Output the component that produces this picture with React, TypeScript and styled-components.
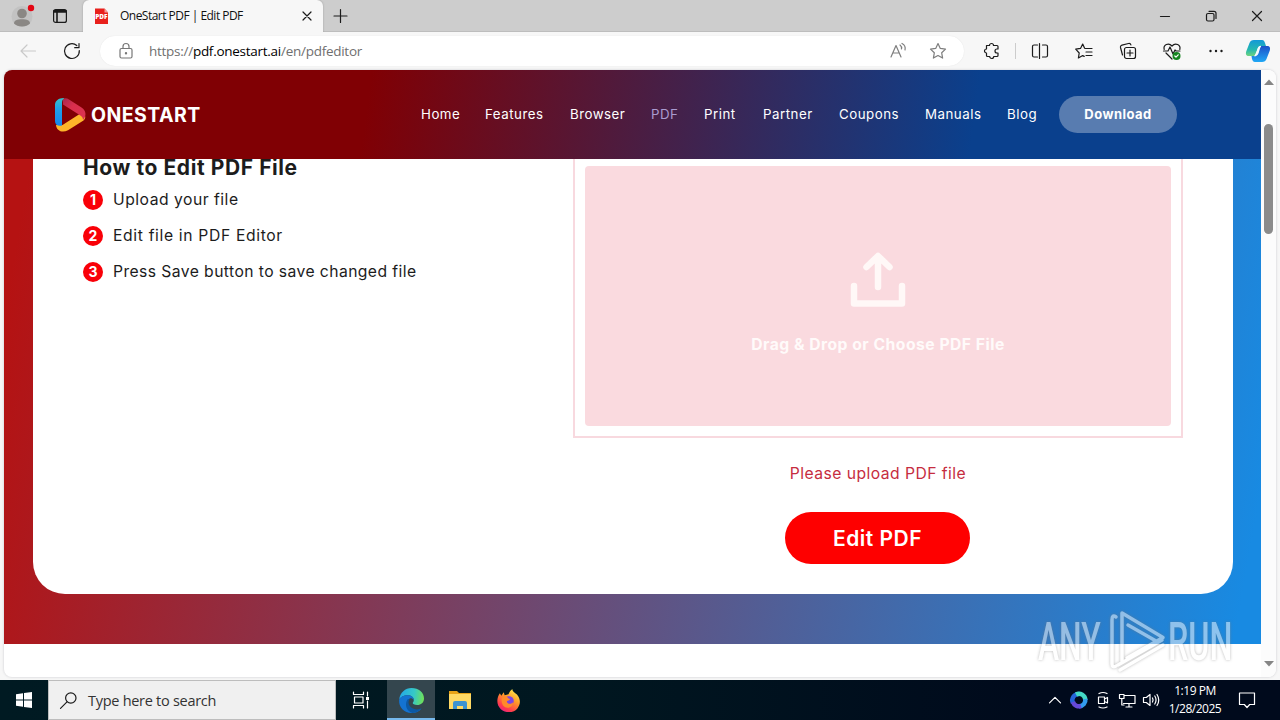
import React from "react";
import styled, { createGlobalStyle } from "styled-components";

const ui = `"Open Sans", "Noto Sans", sans-serif`;
const site = `Inter, "Liberation Sans", sans-serif`;

const Global = createGlobalStyle`
  * { box-sizing: border-box; }
  body { margin: 0; overflow: hidden; }
`;

const Desktop = styled.div`
  position: relative;
  width: 1280px;
  height: 720px;
  display: flex;
  flex-direction: column;
  overflow: hidden;
  background: #f7f7f7;
  font-family: ${ui};
  white-space: nowrap;
`;

const Icon = styled.svg<{ $w?: number; $h?: number }>`
  display: block;
  flex: none;
  width: ${(p) => p.$w ?? 20}px;
  height: ${(p) => p.$h ?? p.$w ?? 20}px;
  overflow: visible;
  fill: none;
  stroke: ${(p) => p.color ?? "#1b1b1b"};
  stroke-width: 1.2;
  stroke-linecap: round;
  stroke-linejoin: round;
`;

/* ---------- tab strip ---------- */
const TabStrip = styled.div`
  display: flex;
  height: 32px;
  background: #cdcdcd;
  box-shadow: inset 0 -1px #bdbdbd;
`;
const StripTools = styled.div`
  width: 83px;
  display: flex;
  align-items: center;
  gap: 19px;
  padding-left: 12px;
`;
const Tab = styled.div`
  width: 240px;
  display: flex;
  align-items: center;
  padding: 0 12px 0 12px;
  background: #f7f7f7;
  border-radius: 6px 6px 0 0;
  box-shadow: 0 0 2px #999;
  clip-path: inset(0 -3px 0 -3px);
`;
const TabTitle = styled.span`
  flex: 1;
  margin: -1px 0 0 11px;
  font-size: 12px;
  letter-spacing: -0.52px;
  color: #111;
`;
const NewTab = styled.div`
  flex: 1;
  display: flex;
  align-items: center;
  padding-left: 11px;
`;
const WindowButtons = styled.div`
  display: flex;
  align-items: center;
  gap: 34px;
  padding-right: 17px;
`;

/* ---------- toolbar ---------- */
const Toolbar = styled.div`
  display: flex;
  align-items: center;
  height: 38px;
  padding: 0 10px 0 18px;
  background: #f7f7f7;
`;
const NavButtons = styled.div`
  display: flex;
  gap: 24px;
  width: 82px;
`;
const AddressBar = styled.div`
  width: 864px;
  height: 30px;
  display: flex;
  align-items: center;
  padding: 0 16px;
  border-radius: 15px;
  background: #fff;
  box-shadow: 0 0 1px #ddd;
`;
const Url = styled.span`
  flex: 1;
  margin-left: 13px;
  font-size: 13.5px;
  letter-spacing: -0.27px;
  color: #6f6f6f;
  b {
    font-weight: 400;
    color: #000;
  }
`;
const BarIcons = styled.div`
  display: flex;
  gap: 20px;
`;
const ToolIcons = styled.div`
  flex: 1;
  display: flex;
  align-items: center;
  gap: 24px;
  padding-left: 18px;
  > :last-child {
    margin-left: -4px;
  }
`;
const Separator = styled.i`
  width: 1px;
  height: 16px;
  margin: 0 -10px 0 -11px;
  background: #ccc;
`;

/* ---------- web page ---------- */
const Viewport = styled.div`
  display: flex;
  width: 1272px;
  height: 607px;
  margin: 0 4px 3px;
  overflow: hidden;
  border-radius: 8px;
  background: #fff;
  box-shadow: 0 0 2px 1px #e2e2e4;
`;
const Page = styled.div`
  width: 1257px;
  display: flex;
  flex-direction: column;
  font-family: ${site};
`;
const Header = styled.header`
  z-index: 1;
  display: flex;
  align-items: center;
  height: 89px;
  padding-left: 51px;
  background: linear-gradient(98deg, #800004 29%, #0a408d 77%);
`;
const Brand = styled.div`
  width: 366px;
  display: flex;
  align-items: center;
  gap: 5px;
`;
const BrandName = styled.span`
  font-size: 19.5px;
  font-weight: 700;
  letter-spacing: 0.45px;
  color: #fff;
`;
const NavItem = styled.a<{ $w: number; $active?: boolean }>`
  width: ${(p) => p.$w}px;
  margin: -2px 25px 0 0;
  font-size: 13.3px;
  letter-spacing: 0.5px;
  color: ${(p) => (p.$active ? "#a99bd0" : "#fff")};
`;
const Download = styled.a`
  width: 118px;
  height: 37px;
  margin-left: -2px;
  border-radius: 19px;
  background: #587cb0;
  color: #fff;
  font-size: 13px;
  font-weight: 700;
  letter-spacing: 0.45px;
  line-height: 37px;
  text-align: center;
`;
const Hero = styled.main`
  height: 485px;
  padding: 0 28px 50px 29px;
  background: linear-gradient(100deg, #b51212 2%, #188ae2 98%);
`;
const Card = styled.section`
  height: 435px;
  display: flex;
  justify-content: space-between;
  padding: 0 50px;
  border-radius: 0 0 32px 32px;
  background: #fff;
`;
const Steps = styled.div`
  margin-top: -7px;
  color: #1c1c1c;
`;
const Title = styled.h2`
  margin: 0 0 2px;
  font-size: 21px;
  font-weight: 700;
  letter-spacing: 0.58px;
  line-height: 32px;
`;
const Step = styled.div`
  display: flex;
  align-items: center;
  gap: 10px;
  height: 28px;
  margin-bottom: 8px;
`;
const StepText = styled.span<{ $spacing: number }>`
  margin-top: -2px;
  font-size: 15.7px;
  letter-spacing: ${(p) => p.$spacing}px;
`;
const StepNumber = styled.span`
  width: 20px;
  height: 20px;
  border-radius: 50%;
  background: #f90008;
  color: #fff;
  font-size: 14px;
  font-weight: 700;
  line-height: 20px;
  text-align: center;
`;
const UploadColumn = styled.div`
  width: 610px;
  display: flex;
  flex-direction: column;
  align-items: center;
`;
const DropFrame = styled.div`
  width: 100%;
  height: 279px;
  padding: 7px 10px 10px;
  border: 2px solid #f8d9df;
  border-top: 0;
`;
const DropZone = styled.div`
  height: 260px;
  display: flex;
  flex-direction: column;
  align-items: center;
  padding-top: 86px;
  border-radius: 4px;
  background: #fadadf;
  color: #fffafa;
  font-size: 15.7px;
  font-weight: 700;
  letter-spacing: 0.5px;
`;
const DropLabel = styled.span`
  margin-top: 25px;
  line-height: 24px;
`;
const Warning = styled.p`
  margin: 24px 0 26px;
  line-height: 24px;
  font-size: 15.7px;
  letter-spacing: 0.45px;
  color: #c62c40;
`;
const EditButton = styled.button`
  width: 185px;
  height: 52px;
  flex: none;
  margin-right: 1px;
  border: 0;
  border-radius: 26px;
  background: #fe0000;
  color: #fff;
  font: 600 21px/52px ${site};
  letter-spacing: 0.5px;
`;
const Scrollbar = styled.div`
  flex: 1;
  display: flex;
  flex-direction: column;
  align-items: center;
  padding: 9px 0 10px;
  background: #fcfcfc;
`;
const Thumb = styled.div`
  width: 9px;
  height: 110px;
  margin: 39px 0 auto;
  border-radius: 5px;
  background: #8b8b8b;
`;

/* ---------- watermark ---------- */
const Watermark = styled.svg`
  position: absolute;
  left: 1030px;
  top: 604px;
  width: 230px;
  height: 76px;
  opacity: 0.5;
  filter: drop-shadow(0 0 1.5px #777);
  font-family: Roboto, sans-serif;
  font-size: 53px;
  font-weight: 500;
`;

/* ---------- taskbar ---------- */
const Taskbar = styled.div`
  display: flex;
  align-items: center;
  height: 40px;
  background: linear-gradient(90deg, #001a22, #001720 45%, #000a1c 80%);
`;
const TaskButton = styled.div<{ $active?: boolean; $w?: number }>`
  width: ${(p) => p.$w ?? 49}px;
  height: 40px;
  display: flex;
  align-items: center;
  justify-content: center;
  background: ${(p) => (p.$active ? "#34464e" : "none")};
  box-shadow: ${(p) => (p.$active ? "inset 0 -2px #76b9ed" : "none")};
`;
const Search = styled.div`
  width: 288px;
  height: 40px;
  display: flex;
  align-items: center;
  gap: 11px;
  padding-left: 11px;
  border: 1px solid #bdbdbd;
  background: #f0f0f0;
  color: #333;
  font-size: 14.5px;
  letter-spacing: -0.28px;
`;
const Tray = styled.div`
  margin-left: auto;
  display: flex;
  align-items: center;
  gap: 6px;
  padding-right: 24px;
`;
const Clock = styled.div`
  width: 64px;
  margin: 0 5px 0 -3px;
  color: #fff;
  font-size: 12px;
  letter-spacing: -0.48px;
  line-height: 18px;
  text-align: center;
`;

const nav: [string, number][] = [
  ["Home", 39],
  ["Features", 60],
  ["Browser", 56],
  ["PDF", 28],
  ["Print", 34],
  ["Partner", 51],
  ["Coupons", 61],
  ["Manuals", 57],
  ["Blog", 29],
];
const steps: [string, number][] = [
  ["Upload your file", 0.5],
  ["Edit file in PDF Editor", 0.65],
  ["Press Save button to save changed file", 0.42],
];

const Profile = () => (
  <Icon $w={22} viewBox="0 0 22 22">
    <g stroke="none">
      <circle cx="10" cy="11.5" r="10.5" fill="#c2c2c2" />
      <circle cx="10" cy="8.5" r="4.8" fill="#8a8784" />
      <path d="M2 18.5c0-3 3-4.300 8-4.300s8 1.300 8 4.300c-2 2-4.500 3-8 3s-6-1-8-3z" fill="#8a8784" />
      <circle cx="19" cy="3" r="3.200" fill="#e30613" />
    </g>
  </Icon>
);

const PdfIcon = () => (
  <Icon $w={14} $h={17} viewBox="0 0 14 17">
    <path d="M0 .5h9.500L13 4.500V16H0z" fill="#e8201c" stroke="none" />
    <path d="M9.500 .5v4H13z" fill="#f79a94" stroke="none" />
    <text x="0.200" y="10.800" fontSize="6" fontWeight="800" fill="#fff" stroke="none" textLength="12.300" lengthAdjust="spacingAndGlyphs">PDF</text>
  </Icon>
);

const Logo = () => (
  <Icon $w={31} $h={34} viewBox="0 0 31 34">
    <defs>
      <linearGradient id="blue" x1="0" y1="0" x2="0" y2="1">
        <stop offset="0" stopColor="#35c3c8" />
        <stop offset=".4" stopColor="#1f9fe8" />
        <stop offset="1" stopColor="#1587ee" />
      </linearGradient>
      <linearGradient id="red" x1="0" y1="0" x2="1" y2="1">
        <stop offset="0" stopColor="#a9284f" />
        <stop offset=".4" stopColor="#d92f4c" />
        <stop offset="1" stopColor="#dc3350" />
      </linearGradient>
    </defs>
    <g stroke="none">
      <path d="M7.500 27 27 14.500c3.500 2 4.500 5.500 1.500 8L13 32.200C7.500 35.300 1.500 33 1 27z" fill="#fdb52a" />
      <path d="M8 1c2-1.200 4-.8 6 .5l12.500 8c4.800 3 5.300 8.500 1.500 12.500 0-2-1-3.500-3-4.700L8 6.500z" fill="url(#red)" />
      <path d="M0 7C0 2.500 4-.3 9.500 0 7 1.500 7 4 7 6v21.500C3 28.500 0 27 0 23z" fill="url(#blue)" />
    </g>
  </Icon>
);

const Edge = () => (
  <Icon $w={25} viewBox="0 0 24 24">
    <defs>
      <linearGradient id="edge" x1="0" y1=".3" x2="1" y2=".4">
        <stop offset="0" stopColor="#23a7ea" />
        <stop offset=".6" stopColor="#36c9c6" />
        <stop offset="1" stopColor="#6fe15a" />
      </linearGradient>
    </defs>
    <g stroke="none">
      <path d="M.2 11C1 4.500 6 0 12 0c7 0 12 4.500 12 10 0 4-3 6.300-6.500 6.300-3 0-4.300-1-4.300-1.800 0-.7 1-1.200 1-3C14.200 9 11.500 7 8.500 7 4.500 7 1.200 9 .2 11z" fill="url(#edge)" />
      <path d="M.1 11.500C1 8.500 4.500 7 8.500 7c3 0 5.700 2 5.700 4.500-1-1.500-2.500-2-4-1.500-3 2-3 6.500.3 9.500 3 2.500 7.500 2.500 11 .3C19.500 22.500 16 24 12 24 5 24-.4 18.500.1 11.500z" fill="#1473d1" />
      <path d="M8.500 10.500C6 13.500 6 19 9.500 22c1 1 2.200 1.700 3.500 2 3.700-.2 7-2 8.700-4.500-6 2.800-12-.5-12.500-5-.1-1.500.2-3 1-4z" fill="#0c59a4" />
    </g>
  </Icon>
);

export default function App() {
  return (
    <Desktop>
      <Global />
      <TabStrip>
        <StripTools>
          <Profile />
          <Icon $w={14} viewBox="0 0 14 14">
            <rect x=".6" y=".6" width="12.800" height="12.800" rx="2" />
            <path d="M1 1.800h12M1 3h12M4 3v10" strokeWidth="1.600" />
          </Icon>
        </StripTools>
        <Tab>
          <PdfIcon />
          <TabTitle>OneStart PDF | Edit PDF</TabTitle>
          <Icon $w={8} viewBox="0 0 8 8"><path d="M0 0l8 8M8 0 0 8" /></Icon>
        </Tab>
        <NewTab>
          <Icon $w={14} viewBox="0 0 14 14"><path d="M6.500 .5v13M0 7h13" /></Icon>
        </NewTab>
        <WindowButtons>
          <Icon $w={12} viewBox="0 0 12 12"><path d="M1.500 6.500h9" /></Icon>
          <Icon $w={12} viewBox="0 0 12 12">
            <rect x="1.500" y="3.500" width="7.500" height="7.500" rx="1.500" />
            <path d="M4 1.300h5a2 2 0 0 1 2 2V8.500" />
          </Icon>
          <Icon $w={12} viewBox="0 0 12 12"><path d="M1.500 1.500l9 9M10.500 1.500l-9 9" /></Icon>
        </WindowButtons>
      </TabStrip>

      <Toolbar>
        <NavButtons>
          <Icon color="#c9c9c9" viewBox="0 0 20 20"><path d="M17.500 10H3M9 4l-6 6 6 6" /></Icon>
          <Icon viewBox="0 0 20 20"><path d="M17.300 9.500a7.400 7.400 0 1 1-2.500-5M17 2.500v4.200h-4.300" /></Icon>
        </NavButtons>
        <AddressBar>
          <Icon color="#777" viewBox="0 0 20 20">
            <rect x="4" y="7.500" width="12" height="9.500" rx="1.500" />
            <path d="M7 7.500V5.500a3 3 0 0 1 6 0v2" />
            <circle cx="10" cy="12.300" r=".6" />
          </Icon>
          <Url>https://<b>pdf.onestart.ai</b>/en/pdfeditor</Url>
          <BarIcons>
            <Icon color="#7e7e7e" viewBox="0 0 20 20">
              <path d="M3 16 8 4.500 13 16M4.800 12h6.500M12 4q2 1.500 1.500 4M14 2.500q4 2 3 6.500" />
            </Icon>
            <Icon color="#7e7e7e" viewBox="0 0 20 20">
              <path d="m10 2.500 2.300 4.900 5.200.7-3.800 3.700.9 5.300-4.600-2.600-4.600 2.600.9-5.300L2.500 8.100l5.200-.7z" />
            </Icon>
          </BarIcons>
        </AddressBar>
        <ToolIcons>
          <Icon viewBox="0 0 20 20">
            <path d="M4.500 4.500h3a2 2 0 1 1 4 0H15a1 1 0 0 1 1 1V8h-1a2 2 0 0 0 0 4h1v2.500a1 1 0 0 1-1 1h-3.300a2 2 0 1 1-4 0H5.500a1 1 0 0 1-1-1V12a2 2 0 1 1 0-4z" />
          </Icon>
          <Separator />
          <Icon viewBox="0 0 20 20">
            <path d="M7.500 4H4a1.500 1.500 0 0 0-1.500 1.500v9A1.500 1.500 0 0 0 4 16h3.500M12.500 4H16a1.500 1.500 0 0 1 1.500 1.500v9A1.500 1.500 0 0 1 16 16h-3.500M9.500 2.500v15" />
          </Icon>
          <Icon viewBox="0 0 20 20">
            <path d="M10.500 7 8.700 3 6.500 7.400l-4.800.8L5.200 12l-.8 5 4.300-2.400 1.500.8M11 7.500h7M12 11h6M12 14.500h6" />
          </Icon>
          <Icon viewBox="0 0 20 20">
            <rect x="6.500" y="6.500" width="11" height="11" rx="2" />
            <path d="M12 9v6M9 12h6M4.500 14l-2-7.500a2 2 0 0 1 1.500-2.400L10.500 2.500a2 2 0 0 1 2.400 1.400" />
          </Icon>
          <Icon viewBox="0 0 20 20">
            <path d="M2.200 8.500C1 4 6.500 1 10 5c3.500-4 9-1 7.800 3.500M4 12l6 6M1.500 10H6l2-4 3 7 2-4 1 1h4" />
            <circle cx="14.500" cy="15" r="4" fill="#15851f" stroke="none" />
            <path d="m12.800 15 1.200 1.200 2.200-2.400" stroke="#fff" />
          </Icon>
          <Icon viewBox="0 0 20 20">
            <g fill="#1b1b1b" stroke="none">
              <circle cx="4.500" cy="10" r="1.200" /><circle cx="10" cy="10" r="1.200" /><circle cx="15.500" cy="10" r="1.200" />
            </g>
          </Icon>
          <Icon $w={24} viewBox="0 0 24 24">
            <defs>
              <linearGradient id="cpA" x1="0" y1="0" x2="0" y2="1">
                <stop offset="0" stopColor="#1398d8" /><stop offset=".6" stopColor="#25b8b0" /><stop offset="1" stopColor="#6fd47e" />
              </linearGradient>
              <linearGradient id="cpB" x1="0" y1="0" x2="0" y2="1">
                <stop offset="0" stopColor="#1c50c8" /><stop offset="1" stopColor="#20a8f5" />
              </linearGradient>
            </defs>
            <g stroke="none">
              <path d="M8 1h8c2 0 2.500 1.500 3 3l1 3h-5c-2 0-3 1-3.500 3l-1.500 5c-.5 1.500-1.500 2-3 2H3c-3 0-3.500-2-2.800-4.500L3.500 4C4.300 2 5.500 1 8 1z" fill="url(#cpA)" />
              <path d="M16 23H9c-2 0-2.500-1.500-3-3l-.5-3H8c2 0 3-1 3.500-3L13 9c.5-1.500 1.500-2 3-2h5c3 0 3.500 2 2.800 4.500L20.500 20c-.8 2-2 3-4.500 3z" fill="url(#cpB)" />
              <path d="M12.500 9q.6-1.500 2-1.700-.6.7-1 1.700l-1.500 5q-.8 2.500-3 2.800.8-.8 1.500-2.800z" fill="#f5fbff" stroke="#f5fbff" strokeWidth="1.200" />
            </g>
          </Icon>
        </ToolIcons>
      </Toolbar>

      <Viewport>
        <Page>
          <Header>
            <Brand>
              <Logo />
              <BrandName>ONESTART</BrandName>
            </Brand>
            {nav.map(([label, w]) => (
              <NavItem key={label} $w={w} $active={label === "PDF"}>{label}</NavItem>
            ))}
            <Download>Download</Download>
          </Header>
          <Hero>
            <Card>
              <Steps>
                <Title>How to Edit PDF File</Title>
                {steps.map(([text, spacing], i) => (
                  <Step key={text}>
                    <StepNumber>{i + 1}</StepNumber>
                    <StepText $spacing={spacing}>{text}</StepText>
                  </Step>
                ))}
              </Steps>
              <UploadColumn>
                <DropFrame>
                  <DropZone>
                    <Icon $w={56} viewBox="0 0 56 56" color="#fff8f7">
                      <path d="M28 35V4.500M16.500 15 28 4l11.500 11M4 34v17.500h48V34" strokeWidth="6.500" />
                    </Icon>
                    <DropLabel>Drag &amp; Drop or Choose PDF File</DropLabel>
                  </DropZone>
                </DropFrame>
                <Warning>Please upload PDF file</Warning>
                <EditButton>Edit PDF</EditButton>
              </UploadColumn>
            </Card>
          </Hero>
        </Page>
        <Scrollbar>
          <Icon $w={10} $h={6} viewBox="0 0 10 6"><path d="M0 6 5 .5 10 6z" fill="#858585" stroke="none" /></Icon>
          <Thumb />
          <Icon $w={10} $h={6} viewBox="0 0 10 6"><path d="M0 0 5 5.500 10 0z" fill="#858585" stroke="none" /></Icon>
        </Scrollbar>
      </Viewport>

      <Taskbar>
        <TaskButton $w={48}>
          <Icon $w={16} viewBox="0 0 16 16">
            <path d="M0 2.300 7 1.300V7.500H0zM8 1.100 16 0v7.500H8zM0 8.500h7v6.200l-7-1zM8 8.500h8V16l-8-1.100z" fill="#fff" stroke="none" />
          </Icon>
        </TaskButton>
        <Search>
          <Icon $w={17} viewBox="0 0 17 17"><circle cx="10.800" cy="6" r="5.200" /><path d="M7 9.800.5 16.300" /></Icon>
          Type here to search
        </Search>
        <TaskButton $w={51}>
          <Icon $w={16} viewBox="0 0 16 16" color="#fff">
            <path d="M-.5 0v2.500h10V0M-.5 16v-2.500h10V16M.5 5h8.500v6H.5zM13.500 0v4M13.500 9v7" />
            <path d="M12 5h3v3h-3z" fill="#fff" stroke="none" />
          </Icon>
        </TaskButton>
        <TaskButton $active $w={48}><Edge /></TaskButton>
        <TaskButton>
          <Icon $w={22} $h={18} viewBox="0 0 22 18">
            <g stroke="none">
              <path d="M0 0h8l2 2h12v5H0z" fill="#e8a317" />
              <path d="M0 3h22v15H0z" fill="#ffd964" />
              <path d="M4 18v-6a2 2 0 0 1 2-2h10a2 2 0 0 1 2 2v6h-4v-3H8v3z" fill="#3d93d0" />
            </g>
          </Icon>
        </TaskButton>
        <TaskButton>
          <Icon $w={23} viewBox="0 0 24 24">
            <defs>
              <linearGradient id="fox" x1=".8" y1="0" x2=".2" y2="1">
                <stop offset="0" stopColor="#fff14f" /><stop offset=".4" stopColor="#ff9a28" /><stop offset=".8" stopColor="#ff3750" /><stop offset="1" stopColor="#e2238a" />
              </linearGradient>
            </defs>
            <g stroke="none">
              <path d="M3 4.500 4.500 7 7 3.500l1 3 4-1C13 3 14.500 1 16 0c0 3 3 4 5 6 4 5 3.500 10 .5 14C18 25 9 25.500 4 21-.5 17-.8 10 3 4.500z" fill="url(#fox)" />
              <circle cx="12.500" cy="12.500" r="5" fill="#7a45e5" />
              <path d="M5 9c3-2 6-1 7 1 2 0 2 1.500 0 2s-2 1.500-1 2.500c2 1.500 4.500 1 6-1-.5 4-3 6-6 6-4 0-7-4-6-10.500z" fill="#ff8a2a" />
            </g>
          </Icon>
        </TaskButton>
        <Tray>
          <Icon $w={18} viewBox="-2 -2 18 18" color="#fff"><path d="M1.500 9.800 7 4.300l5.500 5.500" /></Icon>
          <Icon $w={18} viewBox="0 0 18 18">
            <g strokeWidth="4.500" strokeLinecap="butt">
              <path d="M3 12A6.300 6.300 0 0 1 9.500 3" stroke="#2563d8" />
              <path d="M6 3.500A6.300 6.300 0 0 1 15.300 9" stroke="#43d9c6" />
              <path d="M15.300 8A6.300 6.300 0 0 1 9 15.300" stroke="#329bee" />
              <path d="M11 15A6.300 6.300 0 0 1 3 11" stroke="#6549d8" />
            </g>
          </Icon>
          <Icon $w={18} viewBox="0 0 18 18" color="#fff">
            <path d="M4.500 6h6v6.500h-6zM10.500 8l3-1.500V12l-3-1.500M5 2.500q4-2 8 0M5 16q4 2 8 0" />
          </Icon>
          <Icon $w={18} viewBox="0 0 18 18" color="#fff">
            <path d="M6 4.500h11v8H5.500M11 12.500V16M8 16h6M1.500 3.500h4.500v4H1.500zM3.800 7.500V14H6" />
          </Icon>
          <Icon $w={18} viewBox="0 0 18 18" color="#fff">
            <path d="M1.500 6.500h2.800L8 3.500v11l-3.700-3H1.500zM10.500 7q1.200 2 0 4M12.800 5q2.500 4 0 8M15 3.500q3.500 5.500 0 11" />
          </Icon>
          <Clock>1:19 PM<br />1/28/2025</Clock>
          <Icon $w={18} viewBox="0 0 18 18" color="#fff">
            <path d="M1.500 2h15v11.500h-4.800L9 16.500l-2.700-3H1.500z" />
          </Icon>
        </Tray>
      </Taskbar>

      <Watermark viewBox="0 0 230 76">
        <g fill="#fff">
          <text transform="translate(8 56) scale(.6 1)">ANY</text>
          <text transform="translate(138 56) scale(.61 1)">RUN</text>
        </g>
        <g fill="none" stroke="#fff" strokeWidth="3.500" strokeLinejoin="round" strokeLinecap="round">
          <path d="M92 57V9l41 24.500L97 54M86 13q-4-3-4 3v44q0 4 4 2M98 21l28 16M88 61l44-25M90 66l43-25" />
        </g>
      </Watermark>
    </Desktop>
  );
}
